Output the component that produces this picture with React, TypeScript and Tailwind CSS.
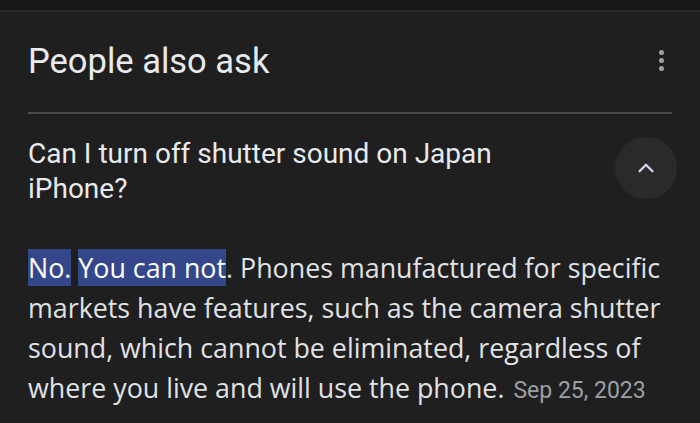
import { ChevronUp } from "lucide-react";

function App() {
  return (
    <div
      className="w-[700px] h-[423px] overflow-hidden bg-[#1f1f1f] text-[#e8eaed]"
      style={{ fontFamily: "Roboto, 'Liberation Sans', sans-serif" }}
    >
      <div className="h-[10px] bg-[#171717]" />
      <div className="h-[2px] bg-[#2a2a2a]" />

      <div className="px-[28px]">
        {/* header */}
        <div className="flex items-start justify-between pt-[28px] h-[102px] border-b-2 border-[#4a4a4a]">
          <h2 className="text-[34.5px] leading-[42px] text-[#e8eaed]">People also ask</h2>
          <div className="flex flex-col gap-[3px] mt-[10px] mr-[8px]">
            <span className="w-[5px] h-[5px] rounded-full bg-[#9aa0a6]" />
            <span className="w-[5px] h-[5px] rounded-full bg-[#9aa0a6]" />
            <span className="w-[5px] h-[5px] rounded-full bg-[#9aa0a6]" />
          </div>
        </div>

        {/* question */}
        <div className="flex items-start justify-between pt-[22px]">
          <p className="text-[28px] leading-[35px] w-[520px]">
            Can I turn off shutter sound on Japan iPhone?
          </p>
          <button className="w-[62px] h-[62px] rounded-full bg-[#2a2a2a] flex items-center justify-center -mr-[5px] mt-[1px]">
            <ChevronUp size={26} strokeWidth={2.2} color="#d2d5f0" />
          </button>
        </div>

        {/* answer */}
        <p
          className="mt-[42px] text-[26.8px] leading-[40px] text-[#e0e2e5]"
          style={{ fontFamily: "'Open Sans', 'Liberation Sans', sans-serif" }}
        >
          <span className="bg-[#34478a] text-white">No.</span>{" "}
          <span className="bg-[#34478a] text-white">You can not</span>. Phones manufactured for specific
          markets have features, such as the camera shutter sound, which cannot be eliminated, regardless of
          where you live and will use the phone.{" "}
          <span
            className="text-[23px] text-[#9aa0a6] ml-[2px]"
            style={{ fontFamily: "Roboto, 'Liberation Sans', sans-serif" }}
          >
            Sep 25, 2023
          </span>
        </p>
      </div>
    </div>
  );
}

export default App;
